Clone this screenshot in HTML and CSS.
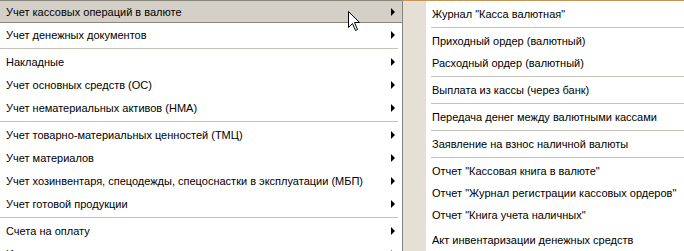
FILE: index.html
```html
<!DOCTYPE html>
<html lang="ru">
  <head>
    <meta charset="UTF-8" />
    <title>Меню</title>
    <link rel="stylesheet" href="styles.css">
  </head>
  <body>
    <div class="screen">
      <ul class="menu main">
        <li class="item active"><span>Учет кассовых операций в валюте</span><i class="arrow"></i></li>
        <li class="item"><span>Учет денежных документов</span><i class="arrow"></i></li>
        <li class="sep"></li>
        <li class="item"><span>Накладные</span><i class="arrow"></i></li>
        <li class="item"><span>Учет основных средств (ОС)</span><i class="arrow"></i></li>
        <li class="item"><span>Учет нематериальных активов (НМА)</span><i class="arrow"></i></li>
        <li class="sep"></li>
        <li class="item"><span>Учет товарно-материальных ценностей (ТМЦ)</span><i class="arrow"></i></li>
        <li class="item"><span>Учет материалов</span><i class="arrow"></i></li>
        <li class="item"><span>Учет хозинвентаря, спецодежды, спецоснастки в эксплуатации (МБП)</span><i class="arrow"></i></li>
        <li class="item"><span>Учет готовой продукции</span><i class="arrow"></i></li>
        <li class="sep"></li>
        <li class="item"><span>Счета на оплату</span><i class="arrow"></i></li>
        <li class="item"><span>Исходящие документы</span><i class="arrow"></i></li>
      </ul>
      <ul class="menu sub">
        <li class="item">Журнал "Касса валютная"</li>
        <li class="sep"></li>
        <li class="item">Приходный ордер (валютный)</li>
        <li class="item">Расходный ордер (валютный)</li>
        <li class="sep"></li>
        <li class="item">Выплата из кассы (через банк)</li>
        <li class="sep"></li>
        <li class="item">Передача денег между валютными кассами</li>
        <li class="sep"></li>
        <li class="item">Заявление на взнос наличной валюты</li>
        <li class="sep"></li>
        <li class="item">Отчет "Кассовая книга в валюте"</li>
        <li class="item">Отчет "Журнал регистрации кассовых ордеров"</li>
        <li class="item">Отчет "Книга учета наличных"</li>
        <li class="item last">Акт инвентаризации денежных средств</li>
      </ul>
      <svg class="cursor" width="13" height="21" viewBox="0 0 13 21">
        <path d="M0.5 0.5 L0.5 16.5 L4.5 12.5 L7.5 19.5 L9.5 18.5 L6.5 11.5 L11.5 11.5 Z" fill="#fff" stroke="#000" stroke-width="1" />
      </svg>
    </div>
  </body>
</html>
```

FILE: styles.css
```css
* {
  margin: 0;
  padding: 0;
  box-sizing: border-box;
}
body {
  font-family: 'Liberation Sans', Tahoma, Arial, sans-serif;
  font-size: 11px;
  color: #000;
  background: #fff;
}
.screen {
  position: relative;
  display: flex;
  width: 684px;
  height: 251px;
  overflow: hidden;
}
.menu {
  list-style: none;
}
.main {
  width: 402px;
  flex: none;
  background: #fff;
}
.main .item {
  height: 23px;
  display: flex;
  align-items: center;
  justify-content: space-between;
  padding: 0 7px 0 6px;
}
.main .item.active {
  background: #d4d0c8;
  border-top: 1px solid #8a877c;
  border-bottom: 1px solid #8a877c;
}
.main .sep {
  height: 1px;
  margin: 2px 4px 1px 0;
  background: #c5c1b6;
}
.arrow {
  width: 0;
  height: 0;
  border-left: 4px solid #000;
  border-top: 4px solid transparent;
  border-bottom: 4px solid transparent;
}
.sub {
  flex: 1;
  border-left: 1px solid #86847c;
  border-top: 1px solid #c4965a;
  padding-top: 2px;
  background: linear-gradient(to right, #e6dfd6 23px, #fff 23px);
}
.sub .item {
  height: 22px;
  display: flex;
  align-items: center;
  padding-left: 29px;
}
.sub .item.last {
  margin-top: 3px;
}
.sub .sep {
  height: 1px;
  margin: 2px 0 2px 28px;
  background: #c5c1b6;
}
.cursor {
  position: absolute;
  left: 348px;
  top: 11px;
}
```
